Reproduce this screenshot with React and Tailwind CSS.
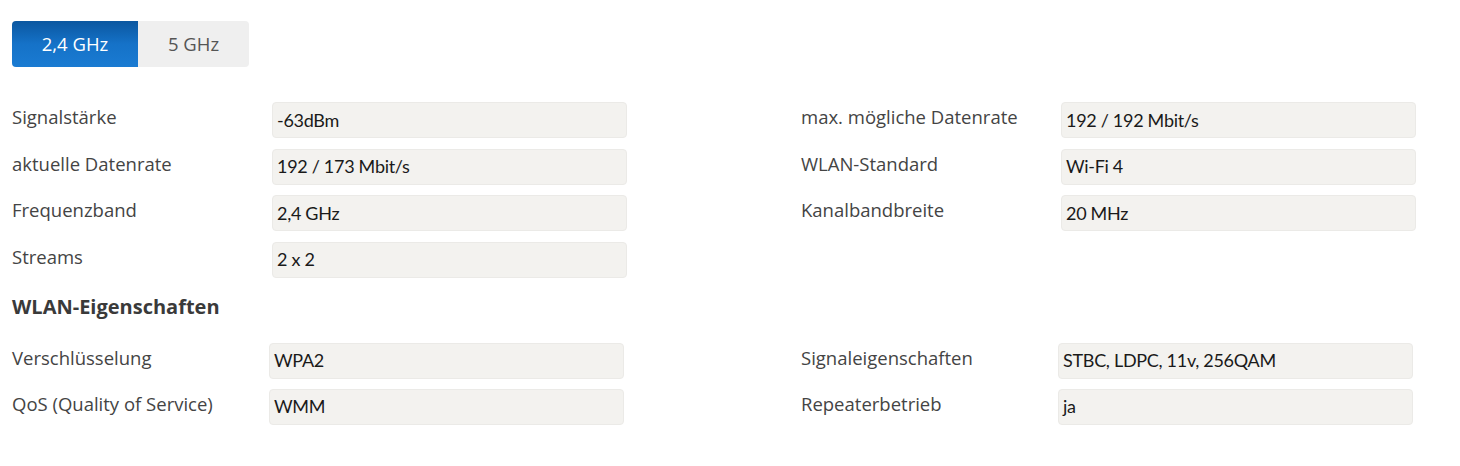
const rows = [
  ["Signalstärke", "-63dBm", "max. mögliche Datenrate", "192 / 192 Mbit/s"],
  ["aktuelle Datenrate", "192 / 173 Mbit/s", "WLAN-Standard", "Wi-Fi 4"],
  ["Frequenzband", "2,4 GHz", "Kanalbandbreite", "20 MHz"],
  ["Streams", "2 x 2", null, null],
];

const props = [
  ["Verschlüsselung", "WPA2", "Signaleigenschaften", "STBC, LDPC, 11v, 256QAM"],
  ["QoS (Quality of Service)", "WMM", "Repeaterbetrieb", "ja"],
];

const Field = ({ label, value, labelW }) => (
  <div className="flex items-center">
    <div className={`${labelW} font-['Open_Sans',sans-serif] text-[18.5px] leading-[24px] text-[#444] -mt-[6px]`}>
      {label}
    </div>
    <div className="w-[355px] h-[36px] flex items-center px-[4px] bg-[#f3f2ef] border border-[#ebeae7] rounded-[4px] font-['Lato',sans-serif] text-[18px] tracking-[-0.3px] text-[#1a1a1a]">
      {value}
    </div>
  </div>
);

const App = () => {
  return (
    <div className="bg-white min-h-[466px] pt-[21px] px-[12px] font-['Open_Sans',sans-serif]">
      <div className="flex w-fit h-[46px] rounded-[4px] overflow-hidden text-[18.5px]">
        <button className="w-[126px] bg-gradient-to-b from-[#0b57a0] via-[#1572c8] to-[#1a7bd2] text-white">
          2,4 GHz
        </button>
        <button className="w-[111px] bg-[#efefef] text-[#555]">5 GHz</button>
      </div>

      <div className="mt-[35px] flex flex-col gap-[10.5px]">
        {rows.map(([l1, v1, l2, v2]) => (
          <div key={l1} className="flex">
            <div className="w-[789px]">
              <Field label={l1} value={v1} labelW="w-[260px]" />
            </div>
            {l2 && <Field label={l2} value={v2} labelW="w-[260px]" />}
          </div>
        ))}
      </div>

      <h2 className="mt-[17px] text-[20px] font-bold text-[#3a3a3a] leading-[24px]">
        WLAN-Eigenschaften
      </h2>

      <div className="mt-[24px] flex flex-col gap-[10px]">
        {props.map(([l1, v1, l2, v2]) => (
          <div key={l1} className="flex">
            <div className="w-[789px]">
              <Field label={l1} value={v1} labelW="w-[257px]" />
            </div>
            <Field label={l2} value={v2} labelW="w-[257px]" />
          </div>
        ))}
      </div>
    </div>
  );
};

export default App;
